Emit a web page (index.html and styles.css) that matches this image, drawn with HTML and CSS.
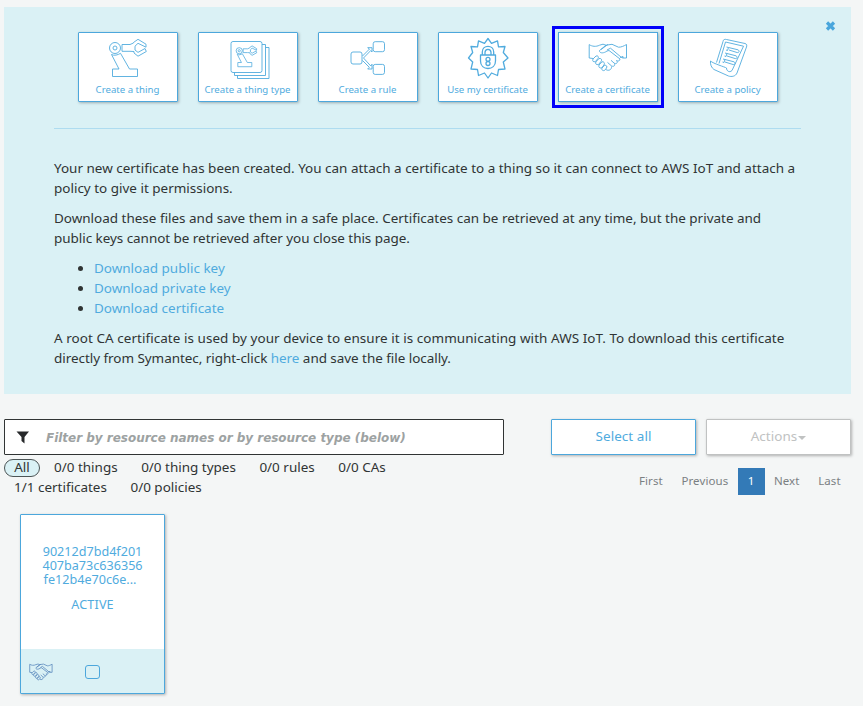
FILE: index.html
```
<!DOCTYPE html>
<html lang="en">
<head>
<meta charset="utf-8">
<title>AWS IoT</title>
<link rel="stylesheet" href="styles.css">
</head>
<body>
<svg class="defs" width="0" height="0">
  <defs>
    <g id="arm">
      <circle cx="37" cy="16" r="5.5"/><circle cx="37" cy="16" r="2"/>
      <path d="M44 12.5H52L55.5 11V10.5L60 7.3L68 12.2V15.2L60 11.3L57 14.2V18L60 20.4L67 16.5L68.3 19.5L60 24.2L56 21V19.5L52 19.3H44ZM33.5 22.5C36 24 40 23 42.5 21.3L51.5 37H59.5V44.5H34.5V37H41Z"/>
    </g>
    <g id="hands">
      <path d="M31.2 12.6C34 14.5 38 15 41.5 13.2L45 12.2L48 13.2L41.5 18.5C41 21 45 22 49 19L51 18.5L62 27C62 29 60 29.5 58.5 28.5M62 25.5L65 24.5V26M31.2 12.6V26L35 26.5M45 12.2M48 13.2L54 12.3L60.5 15.2C63 15.3 66 14 68.5 12.5V26H65L63.5 25.5L52.5 16.2L49 18M43 17.5L50 12.4M58.5 28.5C60.5 31 58 32.5 56 31L53 28.3M56.5 31.5C57.5 34.5 54.5 35 53 33.5L49.5 30.4M53.5 34.5C54 38 50 39.2 48 37.5"/>
      <path d="M35 27L38 24C40 23.3 41 25 40 26.5L37.4 29.5C35.5 30.5 34 29 35 27ZM37.8 30L41 26.5C43.5 26 44.3 28 43 29.5L40.5 32.5C38.5 33 37 32 37.8 30ZM41 33L44 29.8C46 29.5 47 31 46 33L43.5 36C41.5 36.3 40.3 35 41 33ZM44 36L46.5 33.3C48.5 33 49.5 34.5 48.5 36L47 38C45.5 39.5 43 38 44 36Z"/>
    </g>
  </defs>
</svg>

<section class="panel">
  <svg class="close" viewBox="0 0 11 10"><path d="M2 1.5L9 8.5M9 1.5L2 8.5"/></svg>
  <nav class="cards">
    <a class="card"><svg class="icon" viewBox="0 0 100 50"><use href="#arm"/></svg><span>Create a thing</span></a>
    <a class="card"><svg class="icon" viewBox="0 0 100 50"><rect x="33" y="9.5" width="31" height="31" rx="2"/><path d="M64 12.5H67.5V43.5H36.5V40.5M67.5 15.5H71V46.5H39.5V43.5"/><g class="mini" transform="translate(20.5 9.8) scale(.56)"><use href="#arm"/></g></svg><span>Create a thing type</span></a>
    <a class="card"><svg class="icon" viewBox="0 0 100 50"><rect x="33" y="20" width="11" height="12" rx="2"/><rect x="55.2" y="9.7" width="11.3" height="10" rx="2"/><rect x="55.2" y="32.4" width="11.3" height="10" rx="2"/><path d="M44.5 24L51.5 17L49.7 15.7H54V20L52.8 18.5L45.5 26L52.8 34L54 32.2V37H49.7L51.3 35.3L44.5 28.5"/></svg><span>Create a rule</span></a>
    <a class="card"><svg class="icon strong" viewBox="0 0 100 50"><path d="M50 6.5L53.5 11.3L59.5 8.9L60.5 14.8L67 14.5L65.3 20.5L70 26L65.3 30L67 37L60.5 37.5L59.5 43.5L53.5 41L50 46L46.5 41L40.5 43.5L39.5 37.5L33 37L34.7 30L30.5 26L34.7 20.5L33 14.5L39.5 14.8L40.5 8.9L46.5 11.3Z"/><path d="M42.5 23H57.5V29C57.5 34 54 36.5 50 36.5S42.5 34 42.5 29ZM44.3 23V20C44.3 12.5 55.7 12.5 55.7 20V23M47 23V20.5C47 16.3 53 16.3 53 20.5V23"/><circle cx="50" cy="27.3" r="2"/><circle cx="50" cy="31.5" r="2"/></svg><span>Use my certificate</span></a>
    <a class="card selected"><svg class="icon" viewBox="0 0 100 50"><use href="#hands"/></svg><span>Create a certificate</span></a>
    <a class="card"><svg class="icon" viewBox="0 0 100 50"><path d="M45 9.5C45 7.5 47 7 48.5 7.5L67 11.5C69 12 69 13.5 68.5 15L59 41C57.5 44.5 53.5 45 50.5 44L36 37.5C33.5 36 32 32 32.5 29C35 31.5 47 35 48.5 36C48.5 39 51.5 41 54 38.5L65.5 14.2L47.5 10L41 31.5M38.5 30.5L45 9.5"/><path d="M48.5 15L50.5 15.5L60 17.8C62 19 61 21 59 20.5L51 18M47 21L49 21.5L58 23.8C60 25 59 27 57 26.5L49 24M45 27L47 27.5L56 29.8C58 31 57 33 55 32.5L47 30M50.5 15.5L49.5 18.5L48 18M49 21.5L48 24.5L46.5 24M47 27.5L46 30.5L44.5 30"/></svg><span>Create a policy</span></a>
  </nav>
  <div class="message">
    <p>Your new certificate has been created. You can attach a certificate to a thing so it can connect to AWS IoT and attach a<br>policy to give it permissions.</p>
    <p>Download these files and save them in a safe place. Certificates can be retrieved at any time, but the private and<br><span class="tight">public keys cannot be retrieved after you close this page.</span></p>
    <ul><li><a>Download public key</a></li><li><a>Download private key</a></li><li><a>Download certificate</a></li></ul>
    <p><span class="loose">A root CA certificate is used by your device to ensure it is communicating with AWS IoT. To download this certificate</span><br><span class="tight">directly from Symantec, right-click <a>here</a> and save the file locally.</span></p>
  </div>
</section>

<section class="toolbar">
  <div class="filters">
    <div class="search"><svg viewBox="0 0 14 13"><path d="M.5 .5H13L8.5 6V12.5L5.5 10V6Z"/></svg><span>Filter by resource names or by resource type (below)</span></div>
    <div class="types">
      <div class="row"><span class="all">All</span><span>0/0 things</span><span>0/0 thing types</span><span>0/0 rules</span><span>0/0 CAs</span></div>
      <div class="row second"><span>1/1 certificates</span><span>0/0 policies</span></div>
    </div>
  </div>
  <div class="controls">
    <div class="buttons"><button>Select all</button><button class="disabled">Actions<i class="caret"></i></button></div>
    <div class="pager"><a>First</a><a>Previous</a><a class="current">1</a><a>Next</a><a>Last</a></div>
  </div>
</section>

<article class="resource">
  <div class="details"><div class="hash">90212d7bd4f201<br>407ba73c636356<br><span class="cut">fe12b4e70c6e...</span></div><div class="state">ACTIVE</div></div>
  <footer><svg class="small-hands" viewBox="30 11 40 29"><use href="#hands"/></svg><span class="check"></span></footer>
</article>
</body>
</html>
```
FILE: styles.css
```
* { box-sizing: border-box; }
body { margin: 0; padding: 7px 0 0 4px; width: 863px; height: 706px; overflow: hidden; background: #f4f6f6; color: #303434; font: 13.47px/20px "Noto Sans", sans-serif; }
.defs { position: absolute; }
a { color: #50abde; }
.panel { position: relative; width: 847px; height: 387px; padding: 25px 50px 0; background: #daf1f5; }
.close { position: absolute; left: 821px; top: 14px; width: 11px; height: 10px; fill: none; stroke: #49a6dc; stroke-width: 3.2; }
.cards { display: flex; gap: 20px; height: 97px; padding-left: 24px; border-bottom: 1px solid #aedcf0; }
.card { width: 100px; height: 70px; border: 1px solid #4ca7dc; border-radius: 1px; background: #fff; box-shadow: 1px 1px 3px rgba(0,0,0,.28); text-align: center; font-size: 9.65px; line-height: 12px; white-space: nowrap; }
.card span { margin-left: -1px; }
.selected { border-radius: 0; outline: 3px solid #0000fa; outline-offset: 3px; }
.icon { display: block; width: 100px; height: 50px; margin: -1px 0 2px -1px; fill: none; stroke: #50abde; stroke-width: .9; stroke-linejoin: round; }
.strong { stroke-width: 1.3; }
.mini { stroke-width: 1.4; }
.message { padding-top: 29px; white-space: nowrap; }
.tight { letter-spacing: -.04px; }
.loose { letter-spacing: .055px; }
p { margin: 0 0 10px; }
ul { margin: 0 0 10px; padding-left: 40px; }
.toolbar { display: flex; justify-content: space-between; width: 847px; margin-top: 25px; }
.filters { width: 500px; }
.search { display: flex; align-items: center; height: 36px; padding-left: 11px; gap: 16px; border: 1px solid #303434; border-radius: 1px; background: #fff; color: #9da2a2; font: italic bold 12px/20px "DejaVu Sans", sans-serif; white-space: nowrap; }
.search span { padding-top: 2px; letter-spacing: -.02px; }
.search svg { width: 14px; height: 13px; fill: #26282a; }
.types { padding-top: 3px; }
.row { display: flex; gap: 23.5px; height: 20px; align-items: center; white-space: nowrap; }
.row span { margin-top: -2px; }
.row .all { width: 36px; height: 18px; margin: 0 -9.5px 0 0; border: 1px solid #4c5556; border-radius: 9px; background: #daf1f5; line-height: 14px; text-align: center; }
.second { padding-left: 10px; }
.controls { width: 300px; }
.buttons { display: flex; gap: 10px; }
button { width: 145px; height: 36px; padding: 0 0 2px; border: 1px solid #4ca7dc; border-radius: 1px; background: #fff; box-shadow: 1px 1px 3px rgba(0,0,0,.28); color: #50abde; font: inherit; letter-spacing: .05px; }
.disabled { border-color: #c0c2c2; color: #c0c2c2; }
.caret { display: inline-block; margin-left: 1px; border: 4px solid transparent; border-top-color: currentColor; border-bottom: 0; vertical-align: 1px; }
.pager { display: flex; justify-content: flex-end; margin-top: 13px; padding-right: 1px; font-size: 11.5px; line-height: 26px; letter-spacing: .1px; }
.pager a { padding: 0 9.3px; color: #7b8083; }
.pager .current { width: 27px; height: 27px; padding: 0; background: #337ab7; color: #fff; text-align: center; }
.resource { width: 145px; height: 180px; margin: 16px 0 0 16px; border: 1px solid #4ca7dc; border-radius: 1px; background: #fff; box-shadow: 1px 1px 3px rgba(0,0,0,.28); color: #50abde; text-align: center; font-size: 12.6px; line-height: 14px; }
.details { height: 134px; padding-top: 30px; }
.cut { margin-left: -5px; }
.state { margin-top: 11px; letter-spacing: .15px; }
footer { display: flex; align-items: center; height: 44px; padding: 1px 0 0 8px; gap: 32px; background: #daf1f5; }
.small-hands { width: 24px; height: 18px; fill: none; stroke: #628fc0; stroke-width: 1.4; }
.check { width: 15px; height: 14px; border: 1px solid #4ca7dc; border-radius: 3px; }
```
